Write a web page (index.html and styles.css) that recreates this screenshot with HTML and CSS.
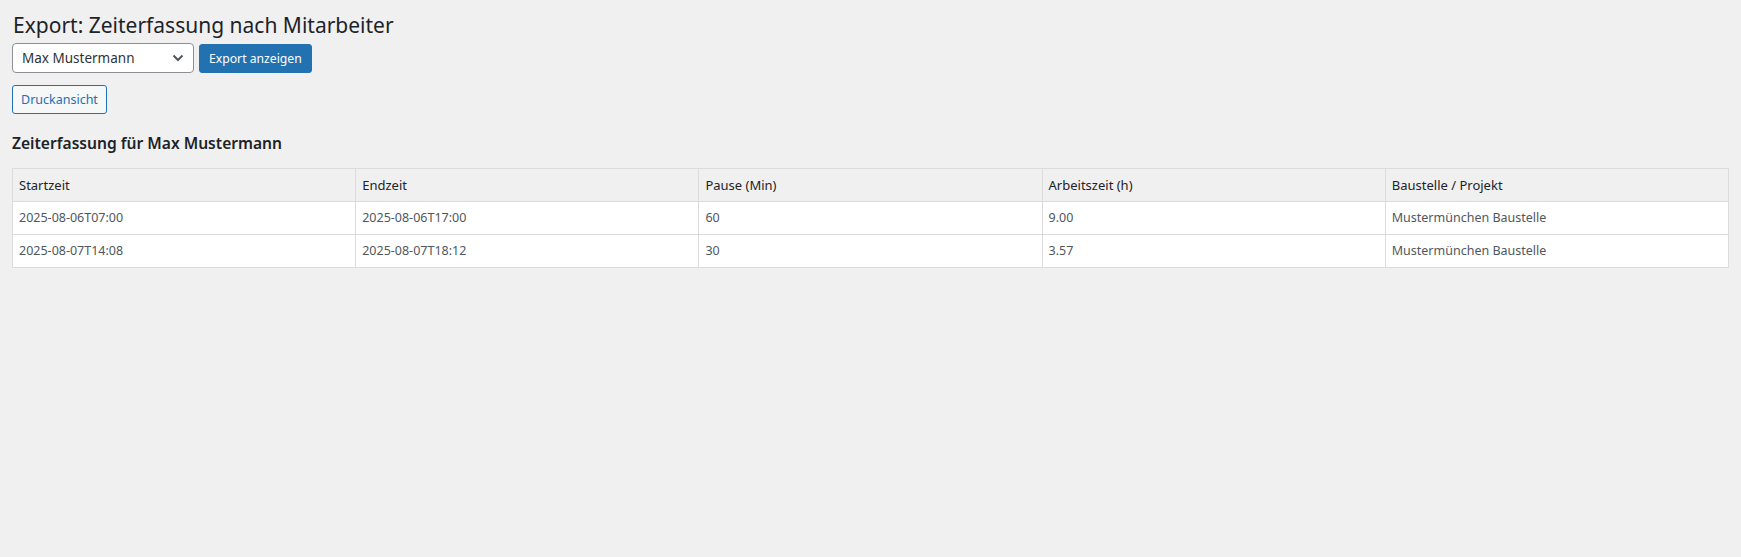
FILE: index.html
```html
<!DOCTYPE html>
<html lang="de">
<head>
<meta charset="utf-8">
<title>Export: Zeiterfassung nach Mitarbeiter</title>
<link rel="stylesheet" href="styles.css">
</head>
<body>
<div class="wrap">
  <h1 class="page-title">Export: Zeiterfassung nach Mitarbeiter</h1>
  <form class="filter">
    <div class="select">
      <span class="select-value">Max Mustermann</span>
      <svg class="chevron" width="12" height="8" viewBox="0 0 12 8"><path d="M1.5 1.5 L6 6 L10.5 1.5" fill="none" stroke="#50575e" stroke-width="2"/></svg>
    </div>
    <button type="button" class="btn-primary">Export anzeigen</button>
  </form>
  <div class="actions">
    <button type="button" class="btn-secondary">Druckansicht</button>
  </div>
  <h2 class="section-title">Zeiterfassung für Max Mustermann</h2>
  <table class="data">
    <thead>
      <tr><th>Startzeit</th><th>Endzeit</th><th>Pause (Min)</th><th>Arbeitszeit (h)</th><th>Baustelle / Projekt</th></tr>
    </thead>
    <tbody>
      <tr><td>2025-08-06T07:00</td><td>2025-08-06T17:00</td><td>60</td><td>9.00</td><td>Mustermünchen Baustelle</td></tr>
      <tr><td>2025-08-07T14:08</td><td>2025-08-07T18:12</td><td>30</td><td>3.57</td><td>Mustermünchen Baustelle</td></tr>
    </tbody>
  </table>
</div>
</body>
</html>
```
FILE: styles.css
```css
html, body {
  margin: 0;
  padding: 0;
  background: #f0f0f1;
}
body {
  font-family: "Noto Sans", "Open Sans", sans-serif;
  font-size: 13px;
  color: #3c434a;
}
.wrap {
  padding: 11px 12px 0 12px;
}
.page-title {
  font-size: 21px;
  font-weight: 400;
  line-height: 28px;
  margin: 0 0 4px 1px;
  color: #1d2327;
}
.filter {
  display: flex;
  gap: 5px;
  align-items: center;
}
.select {
  box-sizing: border-box;
  width: 182px;
  height: 30px;
  border: 1px solid #8c8f94;
  border-radius: 4px;
  background: #fff;
  display: flex;
  align-items: center;
  justify-content: space-between;
  padding: 0 9px 0 9px;
  font-size: 13.5px;
  color: #2c3338;
}
.chevron { display: block; }
.btn-primary {
  box-sizing: border-box;
  height: 29px;
  padding: 0 9px;
  background: #2271b1;
  border: 1px solid #2271b1;
  border-radius: 3px;
  color: #fff;
  font-family: inherit;
  font-size: 12.2px;
}
.actions {
  margin-top: 12px;
  display: flex;
}
.btn-secondary {
  box-sizing: border-box;
  height: 29px;
  padding: 0 8px;
  background: #f6f7f7;
  border: 1px solid #2271b1;
  border-radius: 3px;
  color: #2271b1;
  font-family: inherit;
  font-size: 12.5px;
}
.section-title {
  font-size: 15.6px;
  font-weight: 600;
  line-height: 22px;
  margin: 18px 0 14px 0;
  color: #1d2327;
}
.data {
  width: 100%;
  table-layout: fixed;
  border-collapse: collapse;
  border: 1px solid #dcdcde;
}
.data th, .data td {
  border: 1px solid #dcdcde;
  text-align: left;
  padding: 6px 6px;
  line-height: 20px;
  font-size: 12.5px;
  font-weight: 400;
}
.data th {
  background: #f0f0f1;
  color: #1d2327;
  font-size: 13px;
}
.data td {
  background: #fff;
  color: #50575e;
}
```
